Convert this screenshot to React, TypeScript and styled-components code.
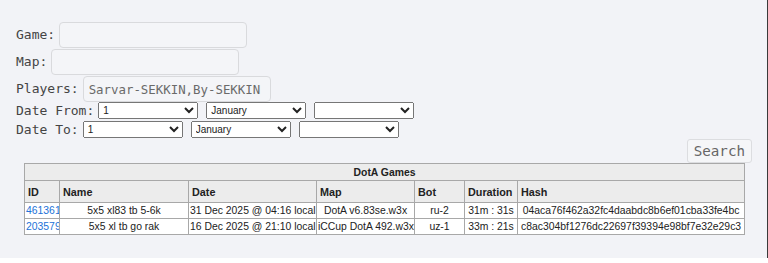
import React from "react";
import styled, { createGlobalStyle } from "styled-components";

const Global = createGlobalStyle`
  html, body { margin: 0; padding: 0; background: #ffffff; }
  body { width: 768px; overflow: hidden; }
`;

const Page = styled.div`
  background: #f2f3f7;
  padding: 22px 16px 23px 16px;
  box-shadow: inset -1px 0 0 #3a3a3a;
  font-family: "DejaVu Sans Mono", "Liberation Mono", monospace;
`;

const Form = styled.div`
  display: flex;
  flex-direction: column;
`;

const Row = styled.div<{ $h: number }>`
  display: flex;
  align-items: flex-start;
  gap: 4px;
  height: ${(p) => p.$h}px;
`;

const Label = styled.span<{ $lh: number }>`
  font-size: 13px;
  color: #444;
  line-height: ${(p) => p.$lh}px;
`;

const TextInput = styled.input`
  box-sizing: border-box;
  width: 188px;
  height: 26px;
  margin: 0;
  padding: 0 0 0 5px;
  border: 1px solid #d9dadd;
  border-radius: 4px;
  background: #f4f5f8;
  font-family: "DejaVu Sans Mono", "Liberation Mono", monospace;
  font-size: 12.4px;
  color: #6a6a6a;
  outline: none;
`;

const Selects = styled.div`
  display: flex;
  gap: 8px;
`;

const Select = styled.select`
  box-sizing: border-box;
  width: 100px;
  height: 17px;
  margin: 0;
  font-family: "Liberation Sans", Arial, sans-serif;
  font-size: 10px;
  color: #222;
`;

const ButtonRow = styled.div`
  display: flex;
  justify-content: flex-end;
  margin-top: -1px;
`;

const SearchButton = styled.button`
  box-sizing: border-box;
  height: 24px;
  padding: 0 6px;
  margin: 0;
  border: 1px solid #dcdde0;
  border-radius: 3px;
  background: #f5f6f8;
  font-family: "DejaVu Sans Mono", "Liberation Mono", monospace;
  font-size: 14.2px;
  color: #666;
`;

const Table = styled.table`
  margin-left: 8px;
  width: 720px;
  table-layout: fixed;
  border-collapse: collapse;
  border: 1px solid #a8a8a8;
  font-family: "Liberation Sans", Arial, sans-serif;
  font-size: 10.4px;
  color: #222;
`;

const TRow = styled.tr<{ $h: number }>`
  height: ${(p) => p.$h}px;
`;

const Caption = styled.th`
  background: #ececec;
  border: 1px solid #a8a8a8;
  text-align: center;
  font-weight: bold;
  padding: 0;
  color: #222;
`;

const Head = styled.th`
  background: #ececec;
  border: 1px solid #a8a8a8;
  text-align: left;
  font-weight: bold;
  font-size: 10.8px;
  padding: 0 3px;
  color: #222;
  white-space: nowrap;
  overflow: hidden;
`;

const Cell = styled.td`
  background: #ffffff;
  border: 1px solid #a8a8a8;
  text-align: center;
  padding: 0 1px;
  white-space: nowrap;
  overflow: hidden;
`;

const IdLink = styled.a`
  color: #2272d8;
  text-decoration: none;
`;

const widths = [35, 129, 128, 98, 50, 53, 227];
const headers = ["ID", "Name", "Date", "Map", "Bot", "Duration", "Hash"];

const games = [
  {
    id: "461361",
    name: "5x5 xl83 tb 5-6k",
    date: "31 Dec 2025 @ 04:16 local",
    map: "DotA v6.83se.w3x",
    bot: "ru-2",
    duration: "31m : 31s",
    hash: "04aca76f462a32fc4daabdc8b6ef01cba33fe4bc",
  },
  {
    id: "203579",
    name: "5x5 xl tb go rak",
    date: "16 Dec 2025 @ 21:10 local",
    map: "iCCup DotA 492.w3x",
    bot: "uz-1",
    duration: "33m : 21s",
    hash: "c8ac304bf1276dc22697f39394e98bf7e32e29c3",
  },
];

function DateSelects() {
  return (
    <Selects>
      <Select defaultValue="1">
        <option value="1">1</option>
      </Select>
      <Select defaultValue="January">
        <option value="January">January</option>
      </Select>
      <Select defaultValue="">
        <option value=""></option>
      </Select>
    </Selects>
  );
}

export default function App() {
  return (
    <>
      <Global />
      <Page>
        <Form>
          <Row $h={27}>
            <Label $lh={26}>Game:</Label>
            <TextInput />
          </Row>
          <Row $h={27}>
            <Label $lh={26}>Map:</Label>
            <TextInput />
          </Row>
          <Row $h={26}>
            <Label $lh={26}>Players:</Label>
            <TextInput defaultValue="Sarvar-SEKKIN,By-SEKKIN" />
          </Row>
          <Row $h={19}>
            <Label $lh={17}>Date From:</Label>
            <DateSelects />
          </Row>
          <Row $h={19}>
            <Label $lh={17}>Date To:</Label>
            <DateSelects />
          </Row>
        </Form>
        <ButtonRow>
          <SearchButton>Search</SearchButton>
        </ButtonRow>
        <Table>
          <colgroup>
            {widths.map((w, i) => (
              <col key={i} style={{ width: w }} />
            ))}
          </colgroup>
          <thead>
            <TRow $h={17}>
              <Caption colSpan={7}>DotA Games</Caption>
            </TRow>
            <TRow $h={22}>
              {headers.map((h) => (
                <Head key={h}>{h}</Head>
              ))}
            </TRow>
          </thead>
          <tbody>
            {games.map((g) => (
              <TRow $h={16} key={g.id}>
                <Cell>
                  <IdLink href="#">{g.id}</IdLink>
                </Cell>
                <Cell>{g.name}</Cell>
                <Cell>{g.date}</Cell>
                <Cell>{g.map}</Cell>
                <Cell>{g.bot}</Cell>
                <Cell>{g.duration}</Cell>
                <Cell>{g.hash}</Cell>
              </TRow>
            ))}
          </tbody>
        </Table>
      </Page>
    </>
  );
}
